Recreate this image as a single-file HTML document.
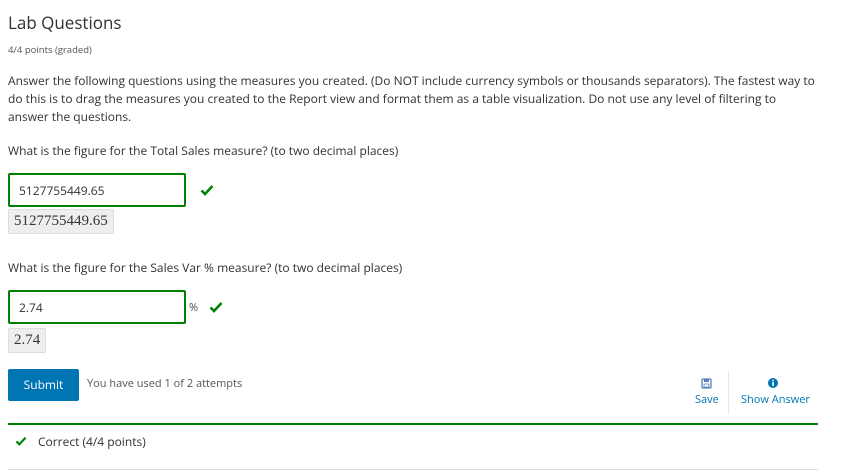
<!DOCTYPE html>
<html><head><meta charset="utf-8"><style>
*{margin:0;padding:0;box-sizing:border-box}
body{width:856px;height:475px;background:#fff;font-family:"Open Sans","Liberation Sans",sans-serif;color:#313131;position:relative;overflow:hidden}
.a{position:absolute;white-space:nowrap}
.t{font-size:12px;line-height:18px;color:#313131}
.inp{position:absolute;border:2px solid #008100;border-radius:2px;height:34px;width:178px;font-size:12px;padding:7px 9px;color:#313131}
.ans{position:absolute;background:#eee;border:1px solid #ddd;border-radius:2px;font-family:"Liberation Serif",serif;font-size:15px;padding:3px 5px;color:#333}
.chk{position:absolute}
</style></head><body>
<div class="a" style="left:8px;top:11px;font-size:17px;color:#313131">Lab Questions</div>
<div class="a" style="left:8px;top:43px;font-size:9.5px;color:#555">4/4 points (graded)</div>
<div class="a t" style="left:8px;top:72px;white-space:normal;width:810px">Answer the following questions using the measures you created. (Do NOT include currency symbols or thousands separators). The fastest way to do this is to drag the measures you created to the Report view and format them as a table visualization. Do not use any level of filtering to answer the questions.</div>
<div class="a t" style="left:8px;top:142px">What is the figure for the Total Sales measure? (to two decimal places)</div>
<div class="inp" style="left:8px;top:173px">5127755449.65</div>
<svg class="chk" style="left:200px;top:184px" width="14" height="12" viewBox="0 0 14 12"><path d="M1.5 6.5l3.5 3.5 7.5-8" stroke="#008100" stroke-width="2.6" fill="none"/></svg>
<div class="ans" style="left:8px;top:209px">5127755449.65</div>
<div class="a t" style="left:8px;top:259px">What is the figure for the Sales Var % measure? (to two decimal places)</div>
<div class="inp" style="left:8px;top:290px">2.74</div>
<div class="a" style="left:189px;top:300px;font-size:11px;color:#555">%</div>
<svg class="chk" style="left:209px;top:301px" width="14" height="12" viewBox="0 0 14 12"><path d="M1.5 6.5l3.5 3.5 7.5-8" stroke="#008100" stroke-width="2.6" fill="none"/></svg>
<div class="ans" style="left:8px;top:328px">2.74</div>
<div class="a" style="left:8px;top:369px;width:71px;height:32px;background:#0075b4;color:#fff;font-size:12px;line-height:32px;text-align:center;border-radius:2px">Submit</div>
<div class="a" style="left:87px;top:376px;font-size:11px;color:#555">You have used 1 of 2 attempts</div>
<svg class="a" style="left:701px;top:378px" width="11" height="11" viewBox="0 0 11 11"><rect x="1" y="1" width="9" height="9" rx="1" fill="none" stroke="#5a7fc0" stroke-width="1.3"/><rect x="3" y="1" width="5" height="3" fill="#5a7fc0"/><rect x="3" y="6" width="5" height="3" fill="#fff" stroke="#5a7fc0" stroke-width=".8"/></svg>
<div class="a" style="left:695px;top:392px;font-size:11px;color:#0075b4">Save</div>
<div class="a" style="left:728px;top:371px;width:1px;height:43px;background:#e5e5e5"></div>
<svg class="a" style="left:768px;top:378px" width="10" height="10" viewBox="0 0 10 10"><circle cx="5" cy="5" r="5" fill="#0075b4"/><rect x="4.2" y="4" width="1.6" height="4" fill="#fff"/><circle cx="5" cy="2.5" r=".9" fill="#fff"/></svg>
<div class="a" style="left:741px;top:392px;font-size:11px;color:#0075b4">Show Answer</div>
<div class="a" style="left:8px;top:423px;width:810px;height:2px;background:#008100"></div>
<svg class="a" style="left:15px;top:436px" width="12" height="10" viewBox="0 0 14 12"><path d="M1.5 6.5l3.5 3.5 7.5-8" stroke="#008100" stroke-width="2.6" fill="none"/></svg>
<div class="a" style="left:38px;top:433px;font-size:12px;color:#313131">Correct (4/4 points)</div>
<div class="a" style="left:8px;top:469px;width:810px;height:1px;background:#ddd"></div>
</body></html>
